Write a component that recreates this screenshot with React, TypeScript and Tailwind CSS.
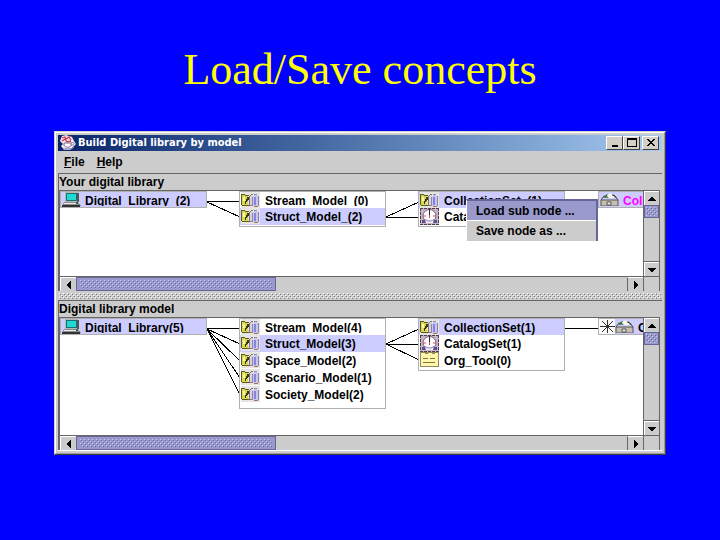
import { ReactNode } from "react";

const FolderIcon = () => (
  <svg viewBox="0 0 19 16" className="h-4 w-[19px] shrink-0" shapeRendering="crispEdges">
    <rect x="0" y="0" width="19" height="16" fill="#e6e4e2" />
    <path d="M1 3h3v1h3v9H1z" fill="#dcd84c" />
    <path d="M0 2h4v1H1v10H0zM1 13h7v1H1zM4 3h4v1H4z" fill="#5c5a20" />
    <path d="M2 5h2v4H2z" fill="#f8f4a8" />
    <path d="M6 5h2v3H7v1H6v1H5v2H4V9h1V7h1z" fill="#3a380f" />
    <path d="M9 4h1V3h2v1h1v10H9z" fill="#d8d6dc" />
    <path d="M8 4h1v10H8zM9 3h1v1H9zM10 2h2v1h-2z" fill="#777480" />
    <path d="M12 5h1V3h3v1h1v10h-5z" fill="#c8c4f4" />
    <path d="M13 5h2v8h-2z" fill="#8a82e0" />
    <path d="M11 5h1v9h-1zM13 2h3v1h-3zM17 4h1v10h-1z" fill="#8b8898" />
    <path d="M9 13h2v1H9zM13 14h4v1h-4z" fill="#a8705c" />
  </svg>
);

const CatalogIcon = () => (
  <svg viewBox="0 0 19 17" className="h-[17px] w-[19px] shrink-0">
    <rect x="0" y="0" width="19" height="17" fill="#c9b4c4" />
    <path d="M0 .5h19M.5 0v17M18.5 0v17M0 16.5h19" stroke="#4d3d50" strokeDasharray="3 1" />
    <circle cx="9.5" cy="8" r="6.5" fill="#fff" stroke="#75667a" />
    <path d="M9.5 1v6" stroke="#332233" />
    <path d="M3 8h3M13 8h3M9.5 7v3" stroke="#d0486c" />
    <path d="M2 12h3l1 3H2zM13 12h4v3h-4z" fill="#5d4f94" />
    <path d="M5 11l4 1 5-1-1 4H6z" fill="#f6f2f8" />
    <path d="M4 11l4 2h3l4-2" fill="none" stroke="#8b80b0" />
  </svg>
);

const ToolIcon = () => (
  <svg viewBox="0 0 19 15" className="h-[15px] w-[19px] shrink-0" shapeRendering="crispEdges">
    <rect width="19" height="15" fill="#8f8a5c" />
    <path d="M1 1h4v1h3V1h4v1h3V1h3v13H1z" fill="#fff6ac" />
    <path d="M3 6h5M10 6h5M3 10h12" stroke="#7d7440" />
  </svg>
);

const ComputerIcon = () => (
  <svg viewBox="0 0 19 15" className="h-[15px] w-[19px] shrink-0" shapeRendering="crispEdges">
    <path d="M3 0h12l2 2v8H3z" fill="#b8b8b8" />
    <path d="M15 1h2v9h-2z" fill="#555" />
    <rect x="4" y="1" width="11" height="8" fill="#16706f" />
    <rect x="5" y="2" width="9" height="6" fill="#20d8d4" />
    <path d="M2 10h14l3 4H0z" fill="#8c8c8c" />
    <path d="M2 11h12M1 13h13" stroke="#ededed" />
    <path d="M0 14h18" stroke="#333" strokeWidth="2" />
    <path d="M14 10h2v2h-2z" fill="#256b45" />
  </svg>
);

const BoxIcon = () => (
  <svg viewBox="0 0 19 14" className="h-[14px] w-[19px] shrink-0">
    <path d="M3 6l4-4h6l4 4z" fill="#4c8e62" />
    <path d="M7 4c1-3 5-3 6-1l2 3H9z" fill="#f6f6ef" />
    <path d="M1 8l3-4h3M12 3l3 1 3 4" fill="none" stroke="#4a4238" />
    <path d="M1 8h17v6H1z" fill="#c4bfb0" stroke="#5a554b" />
    <path d="M7 10h4v3H7z" fill="#eee" stroke="#555" />
  </svg>
);

const StarIcon = () => (
  <svg viewBox="0 0 16 15" className="h-[15px] w-4 shrink-0">
    <rect width="16" height="15" fill="#fafafa" />
    <path d="M8.5 1v13M1 7.5h15M3 2l11 11M14 2L3 13" stroke="#333" />
  </svg>
);

const JavaIcon = () => (
  <svg viewBox="0 0 16 16" className="h-4 w-4 shrink-0">
    <path d="M2 1l4-1 6 2 2 4 2 3-3 3-3 3H4L1 11l2-2-3-3z" fill="#f4e6ed" />
    <path d="M2 3l3-1 1 2 3-2 2 3M2 6l3-2 2 3 4-1" fill="none" stroke="#cb3b57" strokeWidth="1.3" />
    <path d="M4 8h7v2c0 3-6 3-7 0zM11 8c4-2 4 3 0 2" fill="#fff" stroke="#7b6f9c" />
    <path d="M3 14h9l2-2" fill="none" stroke="#6770a8" />
  </svg>
);

type RowProps = { icon: ReactNode; label: string; selected?: boolean };

const Row = ({ icon, label, selected }: RowProps) => (
  <li className={`flex h-[17px] items-start gap-[5px] overflow-hidden pl-px first:h-4 ${selected ? "bg-[#ccccff]" : "bg-white"}`}>
    {icon}
    <span className="pt-[2px] leading-[14px] whitespace-pre">{label}</span>
  </li>
);

// The first label of a column is cut off at its baseline
const ClippedRow = ({ icon, label }: RowProps) => (
  <li className="flex h-4 gap-[5px] pl-px">
    {icon}
    <span className="mt-[2px] h-3 overflow-hidden leading-[14px]">{label}</span>
  </li>
);

const RootNode = ({ label }: { label: string }) => (
  <div className="absolute top-0 left-0 flex h-[17px] w-[147px] gap-1 overflow-hidden border border-[#b0b0b0] bg-[#ccccff] pl-px">
    <ComputerIcon />
    <span className="mt-[2px] h-3 overflow-hidden leading-[14px]">{label}</span>
  </div>
);

const Glyph = ({ d }: { d: string }) => (
  <svg viewBox="0 0 10 10" className="h-[10px] w-[10px]" shapeRendering="crispEdges">
    <path d={d} fill="#000" />
  </svg>
);

const Dots = ({ id, dark, light }: { id: string; dark: string; light: string }) => (
  <svg className="h-full w-full">
    <defs>
      <pattern id={id} width="4" height="4" patternUnits="userSpaceOnUse">
        <path d="M0 0h1v1H0zM2 2h1v1H2z" fill={light} />
        <path d="M1 1h1v1H1zM3 3h1v1H3z" fill={dark} />
      </pattern>
    </defs>
    <rect width="100%" height="100%" fill={`url(#${id})`} />
  </svg>
);

const scrollButton = "flex shrink-0 items-center justify-center border-t border-l border-white bg-[#cccccc]";

const Pane = ({ id, title, tall, children }: { id: string; title: string; tall?: boolean; children: ReactNode }) => (
  <section className="border-t border-l border-[#666666] pr-[2px]">
    <h2 className="h-4 pt-px text-xs leading-[14px] font-bold">{title}</h2>
    <div className="border-t border-l border-[#666666]">
      <div className="flex">
        <div className={`relative min-w-0 flex-1 overflow-hidden bg-white text-xs font-bold ${tall ? "h-[117px]" : "h-[85px]"}`}>
          {children}
        </div>
        <div className="flex w-[17px] flex-col border-x border-[#666666] bg-[#cccccc]">
          <button aria-label="Scroll up" className={`${scrollButton} h-[14px]`}>
            <Glyph d="M4 3h2v1h1v1h1v1h1v1H1V6h1V5h1V4h1z" />
          </button>
          <div className="h-[13px] border border-[#666699] bg-[#9999cc] p-px">
            <Dots id={`${id}-v`} light="#ccccff" dark="#666699" />
          </div>
          <div className="flex-1" />
          <button aria-label="Scroll down" className={`${scrollButton} h-[14px] outline outline-[#666666]`}>
            <Glyph d="M1 3h8v1H8v1H7v1H6v1H4V6H3V5H2V4H1z" />
          </button>
        </div>
      </div>
      <div className="flex h-[15px] border-t border-[#666666] bg-[#cccccc]">
        <button aria-label="Scroll left" className={`${scrollButton} w-4`}>
          <Glyph d="M7 1v8H6V8H5V7H4V6H3V4h1V3h1V2h1V1z" />
        </button>
        <div className="w-1/3 border border-[#666699] bg-[#9999cc] px-[3px] py-[2px]">
          <Dots id={`${id}-h`} light="#ccccff" dark="#666699" />
        </div>
        <div className="flex-1" />
        <button aria-label="Scroll right" className={`${scrollButton} w-4 border-l-[#666666]`}>
          <Glyph d="M3 1v8h1V8h1V7h1V6h1V4H6V3H5V2H4V1z" />
        </button>
        <div className="w-[17px] border-x border-[#666666]" />
      </div>
    </div>
  </section>
);

const nodeBox = "absolute top-0 w-[147px] border border-[#b0b0b0] bg-white";
const windowButton = "flex h-[14px] w-[17px] items-center justify-center border border-t-white border-l-white border-r-[#404040] border-b-[#404040] bg-[#d4d0c8]";

export default function App() {
  return (
    <main className="min-h-screen bg-[#0000ff] px-[54px] pt-11 font-['Liberation_Sans',Arial,sans-serif] text-black">
      <h1 className="text-center font-['Liberation_Serif',serif] text-[44px] leading-[52px] text-[#ffff00]">
        Load/Save concepts
      </h1>

      <div className="mt-[35px] border border-[#d4d0c8] border-r-[#404040] border-b-[#404040] bg-[#cccccc]">
        <div className="border border-t-white border-r-[#999999] border-b-[#999999] border-l-white p-[2px]">
          <header className="flex h-4 items-center gap-[2px] bg-linear-to-r from-[#0a246a] to-[#a6caf0] pr-[3px] pl-[2px]">
            <JavaIcon />
            <span className="flex-1 font-['DejaVu_Sans_Condensed','DejaVu_Sans',sans-serif] text-[11px] leading-4 font-bold text-white">
              Build Digital library by model
            </span>
            <div className="flex">
              <button aria-label="Minimize" className={windowButton}>
                <Glyph d="M2 7h6v2H2z" />
              </button>
              <button aria-label="Maximize" className={windowButton}>
                <Glyph d="M0 0h10v9H0zM1 2v6h8V2z" />
              </button>
              <button aria-label="Close" className={`${windowButton} ml-[2px]`}>
                <Glyph d="M1 1h2v1h1v1h2V2h1V1h2v1H8v1H7v1H6v1h1v1h1v1h1v1H7V7H6V6H4v1H3v1H1V7h1V6h1V5h1V4H3V3H2V2H1z" />
              </button>
            </div>
          </header>

          <nav className="flex h-[22px] items-center gap-3 px-[6px] text-xs font-bold">
            <button><span className="underline">F</span>ile</button>
            <button><span className="underline">H</span>elp</button>
          </nav>

          <Pane id="library" title="Your digital library">
            <svg className="absolute h-full w-full" fill="none" stroke="#000">
              <path d="M147 10.5h33M147 11l33 15M326 26l33-15M326 26.5h33" shapeRendering="crispEdges" />
            </svg>
            <RootNode label="Digital_Library_(2)" />
            <ul className={`${nodeBox} left-[179px] pb-px`}>
              <ClippedRow icon={<FolderIcon />} label="Stream_Model_(0)" />
              <Row icon={<FolderIcon />} label="Struct_Model_(2)" selected />
            </ul>
            <ul className={`${nodeBox} left-[358px] pb-px`}>
              <Row icon={<FolderIcon />} label="CollectionSet_(1)" selected />
              <Row icon={<CatalogIcon />} label="CatalogSet_(1)" />
            </ul>
            <div className="absolute top-0 left-[538px] flex h-[17px] w-[147px] gap-1 border border-[#b0b0b0] bg-[#ccccff] pl-px">
              <BoxIcon />
              <span className="mt-[2px] leading-[14px] text-[#ff00ff]">Collection</span>
            </div>
            <div role="menu" className="absolute top-2 left-[406px] flex w-[132px] flex-col border-t-2 border-r-2 border-l border-[#666699] border-l-white bg-[#cccccc]">
              <button role="menuitem" className="h-5 border-b border-white bg-[#9999cc] pl-[9px] text-left">Load sub node ...</button>
              <button role="menuitem" className="h-5 pl-[9px] text-left">Save node as ...</button>
            </div>
          </Pane>

          <div className="mt-px h-2 p-px">
            <Dots id="divider" light="#ffffff" dark="#777777" />
          </div>

          <Pane id="model" title="Digital library model" tall>
            <svg className="absolute h-full w-full" fill="none" stroke="#000">
              <path
                d="M147 10.5h33M147 11l33 15M147 11l33 32M147 11l33 49M147 11l33 66M326 26l33-15M326 26.5h33M326 26l33 16M505 10.5h34"
                shapeRendering="crispEdges"
              />
            </svg>
            <RootNode label="Digital_Library(5)" />
            <ul className={`${nodeBox} left-[179px] pb-[5px]`}>
              <ClippedRow icon={<FolderIcon />} label="Stream_Model(4)" />
              <Row icon={<FolderIcon />} label="Struct_Model(3)" selected />
              <Row icon={<FolderIcon />} label="Space_Model(2)" />
              <Row icon={<FolderIcon />} label="Scenario_Model(1)" />
              <Row icon={<FolderIcon />} label="Society_Model(2)" />
            </ul>
            <ul className={`${nodeBox} left-[358px] pb-px`}>
              <Row icon={<FolderIcon />} label="CollectionSet(1)" selected />
              <Row icon={<CatalogIcon />} label="CatalogSet(1)" />
              <Row icon={<ToolIcon />} label="Org_Tool(0)" />
            </ul>
            <div className="absolute top-0 left-[538px] flex h-[17px] w-[147px] border border-[#b0b0b0] bg-[#ccccff]">
              <StarIcon />
              <BoxIcon />
              <span className="mt-[2px] ml-1 leading-[14px]">Collection</span>
            </div>
          </Pane>
          <div className="h-px bg-white" />
        </div>
      </div>
    </main>
  );
}
